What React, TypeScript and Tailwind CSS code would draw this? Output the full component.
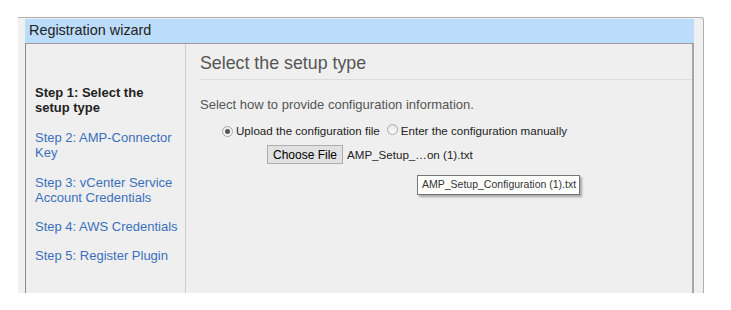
import React from "react";

function Radio({ checked }: { checked?: boolean }) {
  return (
    <span className="inline-flex h-[11px] w-[11px] items-center justify-center rounded-full border border-[#a8a8a8] bg-gradient-to-b from-[#e9e9e9] to-[#f8f8f8]">
      {checked && <span className="h-[5px] w-[5px] rounded-full bg-[#555]" />}
    </span>
  );
}

export default function App() {
  const link = "text-[#3b6fbd]";
  return (
    <div className="relative h-[310px] w-[731px] bg-white" style={{ fontFamily: '"Liberation Sans", Arial, sans-serif' }}>
      <div className="absolute left-0 top-0 h-[310px] w-[731px]">
        <div className="ml-[18px] mt-[17px] flex h-[276px] w-[686px] flex-col rounded-tr-[3px] border-r border-t border-[#b0b0b0] bg-[#f0f0f0] pl-[7px] pr-[9px] pt-[1px]">
          <div className="flex h-[25px] items-center border-b border-[#9a9a9a] bg-[#bcdcfb] pl-[4px] text-[14.4px] text-[#222]">
            Registration wizard
          </div>
          <div className="flex flex-1 border-l border-r-2 border-l-[#8a8a8a] border-r-[#a5a5a5] bg-[#efefef]">
            <div className="w-[160px] shrink-0 border-r border-[#cdcdcd] pl-[9px] pt-[41px] text-[13px] leading-[15px]">
              <div className="font-bold text-[#222]">Step 1: Select the<br />setup type</div>
              <div className={`mt-[15px] ${link}`}>Step 2: AMP-Connector<br />Key</div>
              <div className={`mt-[15px] ${link}`}>Step 3: vCenter Service<br />Account Credentials</div>
              <div className={`mt-[14px] ${link}`}>Step 4: AWS Credentials</div>
              <div className={`mt-[14px] ${link}`}>Step 5: Register Plugin</div>
            </div>
            <div className="flex-1 pl-[14px] pt-[9px]">
              <div className="border-b border-[#dcdcdc] pb-[5px] text-[17.8px] leading-[21px] text-[#555]">
                Select the setup type
              </div>
              <div className="mt-[17px] text-[13px] leading-[15px] text-[#555]">
                Select how to provide configuration information.
              </div>
              <div className="mt-[12px] flex items-center pl-[22px] text-[11.6px] leading-[14px] text-[#222]">
                <Radio checked />
                <span className="ml-[3px]">Upload the configuration file</span>
                <span className="ml-[7px]"><Radio /></span>
                <span className="ml-[3px]">Enter the configuration manually</span>
              </div>
              <div className="mt-[7px] flex items-center pl-[67px] text-[11.6px] text-[#222]">
                <div className="flex h-[19px] w-[76px] items-center justify-center border border-[#adadad] bg-[#e1e1e1] text-[12px] text-black">
                  Choose File
                </div>
                <span className="ml-[4px]">AMP_Setup_…on (1).txt</span>
              </div>
            </div>
          </div>
        </div>
      </div>
      <div
        className="absolute left-[417px] top-[175px] flex h-[20px] w-[163px] items-center whitespace-nowrap border border-[#767676] bg-white pl-[4px] text-[10.5px] text-[#333] shadow-[2px_2px_2px_rgba(0,0,0,0.3)]"
      >
        AMP_Setup_Configuration (1).txt
      </div>
    </div>
  );
}
